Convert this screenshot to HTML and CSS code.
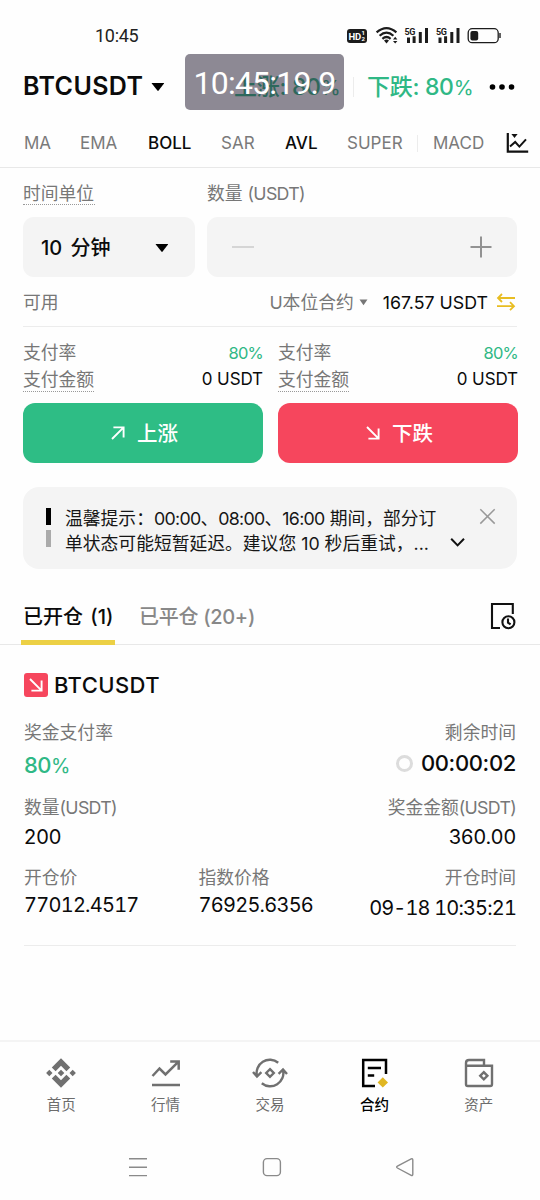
FILE: index.html
```html
<!DOCTYPE html>
<html lang="zh-CN">
<head>
<meta charset="utf-8">
<title>BTCUSDT</title>
<link rel="stylesheet" href="styles.css">
</head>
<body>
<div class="screen">
  <div class="status">
    <span class="clock">10:45</span>
    <svg class="status-icons" width="156" height="20" viewBox="346 26 156 20">
      <rect x="347" y="29" width="20" height="14" rx="3" fill="#1c1c1c"/>
      <text x="348.6" y="39.8" class="hd">HD</text>
      <text x="361.6" y="35.4" class="hd-num">1</text>
      <text x="361.6" y="41.4" class="hd-num">2</text>
      <g fill="none" stroke="#1c1c1c" stroke-width="2.2">
        <path d="M376.6 32.4Q386.5 23.8 396.4 32.4"/>
        <path d="M379.6 35.7Q386.5 29.6 393.4 35.7"/>
        <path d="M382.4 38.8Q386.5 35.2 390.6 38.8"/>
      </g>
      <path d="M384 40.6Q386.5 38.6 389 40.6L386.5 43.4ZM393 39.4L395.2 36.8L397.4 39.4ZM393 41L395.2 43.6L397.4 41Z" fill="#1c1c1c"/>
      <g id="signal">
        <text x="404.6" y="34.8" class="gen">5G</text>
        <path d="M407 37.5h3V43H407ZM412.6 36.2h3V43h-3ZM418.8 32h3V43h-3ZM425 28h3V43h-3Z" fill="#1c1c1c"/>
      </g>
      <use href="#signal" x="31.5"/>
      <rect x="468.2" y="28.7" width="30" height="14" rx="4" fill="none" stroke="#1c1c1c" stroke-width="1.3"/>
      <rect x="470.4" y="31" width="7.8" height="9.6" rx="2" fill="#1c1c1c"/>
      <path d="M500 33v5" stroke="#1c1c1c" stroke-width="1.4"/>
    </svg>
  </div>

  <header class="header">
    <span class="pair">BTCUSDT</span>
    <svg class="pair-caret" width="14" height="10" viewBox="0 0 14 10"><path d="M1.2 1h11.6q.6 0 .2.6L7.6 8.6q-.6.6-1.2 0L.8 1.6Q.6 1 1.2 1Z"/></svg>
    <span class="odds odds-up">上涨: 80<i>%</i></span>
    <span class="odds-sep"></span>
    <span class="odds odds-down">下跌: 80<i>%</i></span>
    <svg class="more" width="28" height="8" viewBox="0 0 28 8"><circle cx="4.5" cy="4" r="2.8"/><circle cx="14" cy="4" r="2.8"/><circle cx="23.5" cy="4" r="2.8"/></svg>
    <div class="timer">10:45:19.9</div>
  </header>

  <nav class="indicators">
    <span>MA</span><span>EMA</span><span class="on">BOLL</span><span>SAR</span><span class="on">AVL</span><span>SUPER</span><span class="macd">MACD</span>
    <svg width="24" height="24" viewBox="0 0 24 24"><path d="M2.8 2v18.6h20.4" fill="none" stroke="#111" stroke-width="2.2"/><path d="M5 15.6L10.2 11l4.2 4.6L21 8.4" fill="none" stroke="#111" stroke-width="2"/><path d="M6.4 3h6.2L9.5 7Z" fill="#111"/></svg>
  </nav>

  <section class="form">
    <div class="labels"><span class="dotted">时间单位</span><span class="label-qty">数量 <span class="tight">(USDT)</span></span></div>
    <div class="fields">
      <div class="select"><span>10 分钟</span><svg width="14" height="10" viewBox="0 0 14 10"><path d="M1.2 1h11.6q.6 0 .2.6L7.6 8.6q-.6.6-1.2 0L.8 1.6Q.6 1 1.2 1Z"/></svg></div>
      <div class="stepper">
        <svg width="22" height="22" viewBox="0 0 22 22"><path d="M0 11h22" stroke="#cfcfcf" stroke-width="1.7"/></svg>
        <svg width="22" height="22" viewBox="0 0 22 22"><path d="M.5 11h21M11 .5v21" stroke="#929292" stroke-width="2"/></svg>
      </div>
    </div>
    <div class="balance">
      <span>可用</span>
      <span class="account">U本位合约</span>
      <svg class="small-caret" width="9" height="7" viewBox="0 0 9 7"><path d="M.5.5h8L4.5 6.3Z" fill="#777"/></svg>
      <span class="amount">167.57 USDT</span>
      <svg class="swap" width="20" height="18" viewBox="0 0 20 18" fill="none" stroke="#e8bd22" stroke-width="1.8"><path d="M19 5H2M6 1L2 5l4 4M1 13.2h17M14 9.2l4 4l-4 4"/></svg>
    </div>
    <div class="sides">
      <div class="side">
        <div class="row"><span>支付率</span><b class="green">80%</b></div>
        <div class="row"><span class="dotted">支付金额</span><b>0 USDT</b></div>
        <button class="btn up"><svg width="14" height="14" viewBox="0 0 14 14"><path d="M1 13L12.4 1.6M2.4 1.4h10.2v10.2"/></svg><span>上涨</span></button>
      </div>
      <div class="side">
        <div class="row"><span>支付率</span><b class="green">80%</b></div>
        <div class="row"><span class="dotted">支付金额</span><b>0 USDT</b></div>
        <button class="btn down"><svg width="14" height="14" viewBox="0 0 14 14"><path d="M1 1L12.4 12.4M2.4 12.6h10.2V2.4"/></svg><span>下跌</span></button>
      </div>
    </div>
    <div class="notice">
      <div class="pager"><i></i><i></i></div>
      <div class="notice-text"><p class="line1">温馨提示：<span class="tight">00:00</span>、<span class="tight">08:00</span>、<span class="tight">16:00</span> 期间，部分订</p><p class="line2">单状态可能短暂延迟。建议您 10 秒后重试，...</p></div>
      <svg class="notice-icons" width="46" height="40" viewBox="450 509 46 40" fill="none"><path d="M480.3 510.2l14.4 14.4M494.7 510.2l-14.4 14.4" stroke="#999" stroke-width="1.5"/><path d="M451.2 539.8l6.4 6.6l6.4-6.6" stroke="#111" stroke-width="2"/></svg>
    </div>
  </section>

  <div class="tabs">
    <span class="tab active">已开仓 (1)</span>
    <span class="tab closed">已平仓 (20+)</span>
    <svg class="history" width="26" height="28" viewBox="0 0 26 28" fill="none" stroke="#111" stroke-width="2.1"><path d="M22.8 12V2H2v24h8"/><circle cx="18.4" cy="20.3" r="6"/><path d="M18 16.6v4l2.6 1.8"/></svg>
  </div>

  <article class="position">
    <div class="title"><span class="badge"><svg width="14" height="14" viewBox="0 0 14 14"><path d="M1 1L12.4 12.4M2.4 12.6h10.2V2.4"/></svg></span>BTCUSDT</div>
    <div class="pair-row labels-a"><span>奖金支付率</span><span>剩余时间</span></div>
    <div class="pair-row values-a"><span class="rate">80<i>%</i></span><span class="remain"><i class="ring"></i>00:00:02</span></div>
    <div class="pair-row labels-b"><span>数量<span class="tight">(USDT)</span></span><span>奖金金额<span class="tight">(USDT)</span></span></div>
    <div class="pair-row values-b"><span>200</span><span>360.00</span></div>
    <div class="trio labels-c"><span>开仓价</span><span>指数价格</span><span>开仓时间</span></div>
    <div class="trio values-c"><span>77012.4517</span><span>76925.6356</span><span class="date">09-18 10:35:21</span></div>
  </article>

  <nav class="tabbar">
    <a><svg width="36" height="34" viewBox="-18 -17 36 34" fill="#707070"><path d="M0-14.8L9.2-5.6L5.4-1.8L0-7.2L-5.4-1.8L-9.2-5.6ZM0 14.8L9.2 5.6L5.4 1.8L0 7.2L-5.4 1.8L-9.2 5.6ZM0-3.3L3.3 0L0 3.3L-3.3 0ZM-11.7-3.2L-8.5 0L-11.7 3.2L-14.9 0ZM11.7-3.2L14.9 0L11.7 3.2L8.5 0Z"/></svg>首页</a>
    <a><svg width="36" height="34" viewBox="-18 -17 36 34" fill="none" stroke="#707070" stroke-width="2.5"><path d="M-14 12h28M-13.5 3L-6.5-4.5L-.5 1.5L12-10.8M4.2-11.5h8.5v8.3"/></svg>行情</a>
    <a><svg width="36" height="34" viewBox="-18 -17 36 34" fill="none" stroke="#707070" stroke-width="2.4"><path d="M8.2-10.3A13.2 13.2 0 0 0-13 3M-17-1L-13 3.6L-8.6-.8M-8.2 10.3A13.2 13.2 0 0 0 13-3M17 1L13-3.6L8.6.8"/><path d="M0-3.8L3.8 0L0 3.8L-3.8 0Z"/></svg>交易</a>
    <a class="current"><svg width="36" height="34" viewBox="-18 -17 36 34" fill="none" stroke="#000" stroke-width="2.5"><path d="M12 1v-14H-10.8v26H1M-6.2-5H7M-6.2 2.4H.2"/><path d="M8.8 4.2L14 9.4L8.8 14.6L3.6 9.4Z" fill="#e0b622" stroke="none"/></svg>合约</a>
    <a><svg width="36" height="34" viewBox="-18 -17 36 34" fill="none" stroke="#707070" stroke-width="2.4"><path d="M-13-7.2H13V11.2q0 1.8-1.8 1.8H-11.2Q-13 13-13 11.2V-10q0-3 3-3H5v5.8"/><path d="M4.8-.8L8.4 2.8L4.8 6.4L1.2 2.8Z"/></svg>资产</a>
  </nav>

  <div class="sysnav">
    <svg width="20" height="20" viewBox="0 0 20 20"><path d="M1 1.8h18M1 10.2h18M1 18.6h18"/></svg>
    <svg width="20" height="20" viewBox="0 0 20 20"><rect x="1.4" y="1.6" width="17" height="17" rx="3.6"/></svg>
    <svg width="20" height="20" viewBox="0 0 20 20"><path d="M2.4 9.2L16.2 1.9q1.6-.6 1.6 1v14.4q0 1.6-1.6 1L2.4 11q-1.5-.9 0-1.8Z"/></svg>
  </div>
</div>
</body>
</html>
```
FILE: styles.css
```css
* { box-sizing: border-box; }
body { margin: 0; background: #fefefe; color: #0b0b0b; font-family: Inter, "Noto Sans CJK SC", sans-serif; }
p { margin: 0; }
i { font-style: normal; }
b { font-weight: 400; }
svg { display: block; flex: none; }
.screen { width: 540px; height: 1200px; overflow: hidden; display: flex; flex-direction: column; font-size: 17.8px; line-height: 1; white-space: nowrap; }
.screen > * { flex: none; }
.tight { letter-spacing: -.7px; }

.status { height: 56px; padding: 26px 38px 0 95px; display: flex; justify-content: space-between; }
.clock { font: 18px/20px Roboto, sans-serif; letter-spacing: -.3px; color: #222; }
.hd { font: 700 9.5px Roboto, sans-serif; fill: #fff; letter-spacing: -.4px; }
.hd-num { font: 700 6px Roboto, sans-serif; fill: #fff; }
.gen { font: 700 9px Roboto, sans-serif; fill: #1c1c1c; letter-spacing: -.4px; }

.header { height: 61px; padding-left: 23px; display: flex; align-items: center; position: relative; }
.pair { width: 128px; font-size: 25px; font-weight: 600; letter-spacing: .4px; }
.odds { padding-top: 2px; font-size: 23px; font-weight: 500; letter-spacing: -.3px; color: #2fb885; }
.odds i { font-weight: 400; font-size: .88em; }
.odds-up { width: 119px; margin-left: 69px; }
.odds-sep { width: 1px; height: 20px; background: #ececec; }
.odds-down { width: 121px; margin-left: 13px; }
.timer { position: absolute; left: 185px; top: -2px; width: 159px; height: 56px; border-radius: 5px; background: rgba(44, 37, 57, .54); color: #fff; font: 32px/59px Roboto, sans-serif; letter-spacing: -.8px; text-align: center; }

.indicators { height: 51px; padding: 2px 0 0 24px; border-bottom: 1px solid #e8e8e8; display: grid; grid-template-columns: 56px 68px 73px 64px 62px 70px 88px 24px; align-items: center; font-size: 17px; color: #7a7a7a; }
.indicators .on { color: #0b0b0b; font-weight: 500; }
.indicators .macd { border-left: 1px solid #ececec; padding-left: 15px; }

.form { height: 401px; padding: 15px 23px 0; color: #777; }
.labels { display: flex; height: 34px; align-items: flex-start; }
.dotted { border-bottom: 1.5px dotted #999; }
.labels .dotted { width: 72px; height: 22px; }
.labels > span { line-height: 21px; }
.label-qty { margin-left: 112px; }
.fields { display: grid; grid-template-columns: 172px 310px; gap: 12px; height: 60px; }
.select, .stepper { background: #f4f4f4; border-radius: 11px; display: flex; align-items: center; justify-content: space-between; }
.select { padding: 2px 26px 0 18px; color: #0b0b0b; font-size: 20px; font-weight: 500; word-spacing: 3px; }
.stepper { padding: 0 25px; }
.balance { height: 50px; padding-top: 2px; border-bottom: 1px solid #ececec; display: flex; align-items: center; }
.account { margin-left: auto; }
.small-caret { margin: 0 15px 0 5px; }
.amount { color: #0b0b0b; }
.swap { margin: 0 1px 2px 8px; }
.sides { display: grid; grid-template-columns: 240px 240px; gap: 15px; margin-right: -1px; padding-top: 13px; }
.row { display: flex; justify-content: space-between; align-items: center; height: 26px; }
.row b { color: #0b0b0b; font-size: 17px; letter-spacing: -.1px; }
.row .green { color: #2fb885; font-size: 16.5px; letter-spacing: -.8px; }
.row .dotted { height: 25px; line-height: 25px; }
.btn { width: 100%; height: 60px; margin: 11px 0 0; border: 0; border-radius: 12px; color: #fff; font: 500 20.5px/1 Inter, "Noto Sans CJK SC", sans-serif; display: flex; align-items: center; justify-content: center; gap: 12px; padding: 0 0 0 3px; }
.btn span { padding-top: 3px; }
.btn svg, .badge svg { fill: none; stroke: #fff; stroke-width: 1.9; }
.up { background: #2ebd85; }
.down { background: #f6465d; }
.notice { margin-top: 24px; height: 82px; border-radius: 16px; background: #f4f4f4; display: flex; padding: 21px 21px 0 23px; }
.pager i { display: block; width: 5px; height: 17px; background: #000; }
.pager i + i { margin-top: 5px; background: #aaa; }
.notice-text { width: 386px; margin-left: 14px; margin-top: -2px; color: #161616; line-height: 25px; }
.notice-icons { margin-top: 0; }

.tabs { height: 76px; border-bottom: 1px solid #e8e8e8; padding: 20px 23px 0; display: flex; }
.tab { font-size: 20px; font-weight: 500; line-height: 56px; height: 56px; }
.active { width: 94px; margin-left: -2px; padding-left: 2px; word-spacing: 2px; border-bottom: 5px solid #ecd045; }
.closed { margin-left: 24px; color: #888; letter-spacing: -.3px; }
.history { margin: 13px 1px 0 auto; }

.position { margin: 0 24px; height: 301px; border-bottom: 1px solid #ececec; font-size: 20px; }
.title { display: flex; align-items: center; gap: 6px; height: 24px; margin-top: 28px; font-size: 22px; font-weight: 500; letter-spacing: .4px; }
.badge { width: 24px; height: 24px; border-radius: 3px; background: #f6465d; display: grid; place-items: center; }
.pair-row, .trio { display: flex; justify-content: space-between; align-items: center; height: 20px; }
.labels-a, .labels-b, .labels-c { padding-top: 2px; font-size: 17.8px; color: #777; }
.labels-a { margin-top: 25px; }
.values-a { margin-top: 13px; font-size: 22px; font-weight: 500; }
.rate { color: #2fb885; letter-spacing: -.5px; }
.rate i { font-weight: 400; font-size: .9em; }
.remain { display: flex; align-items: center; gap: 8px; margin-top: -4px; letter-spacing: -.35px; }
.ring { width: 17px; height: 17px; border: 3px solid #dcdcdc; border-radius: 50%; }
.labels-b { margin-top: 22px; }
.values-b { margin-top: 10px; }
.labels-c { margin-top: 20px; }
.trio { display: grid; grid-template-columns: 174.5px 1fr auto; font-variant-numeric: tabular-nums; }
.values-c { margin-top: 5px; letter-spacing: -.75px; }
.date { padding-top: 6px; letter-spacing: -.85px; }

.tabbar { margin-top: 94px; height: 84px; border-top: 2px solid #f4f4f4; padding: 14px 9px 0 9px; display: grid; grid-template-columns: repeat(5, 1fr); }
.tabbar a { display: flex; flex-direction: column; align-items: center; gap: 8px; font-size: 14.5px; color: #6c6c6c; }
.tabbar .current { color: #000; font-weight: 500; }
.sysnav { margin-top: 33px; padding: 0 125px 0 128px; display: flex; justify-content: space-between; }
.sysnav svg { fill: none; stroke: #8a8a8a; stroke-width: 1.4; }
```
